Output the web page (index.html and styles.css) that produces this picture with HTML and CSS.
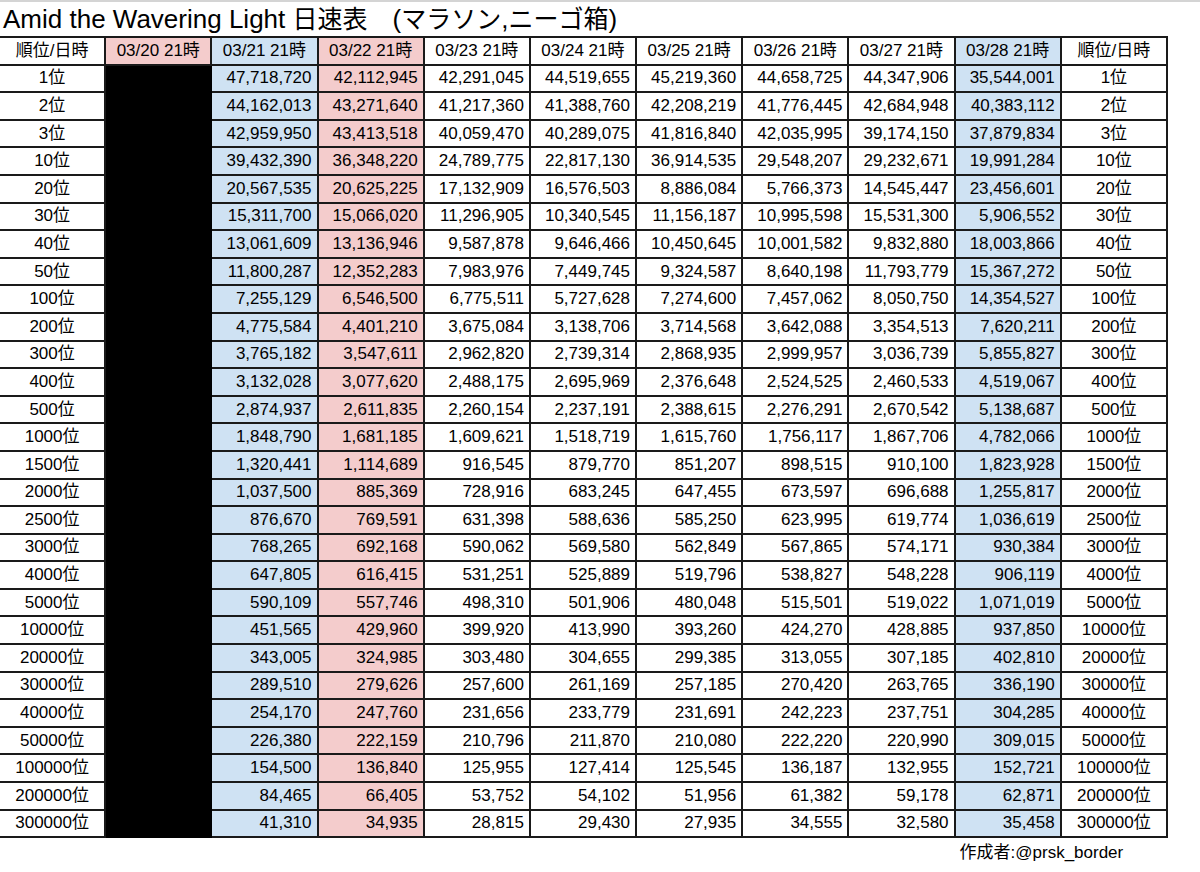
FILE: index.html
```html
<!DOCTYPE html>
<html lang="ja">
<head>
<meta charset="utf-8">
<title>Amid the Wavering Light 日速表</title>
<link rel="stylesheet" href="styles.css">
</head>
<body>
<div class="sheet">
  <div class="title">Amid the Wavering Light <span class="jp">日速表　</span>(<span class="jp">マラソン</span>,<span class="jp">ニーゴ箱</span>)</div>
  <table class="grid">
    <thead>
      <tr>
        <th>順位/日時</th>
        <th class="pink">03/20 21時</th>
        <th class="blue">03/21 21時</th>
        <th class="pink">03/22 21時</th>
        <th>03/23 21時</th>
        <th>03/24 21時</th>
        <th>03/25 21時</th>
        <th>03/26 21時</th>
        <th>03/27 21時</th>
        <th class="blue">03/28 21時</th>
        <th>順位/日時</th>
      </tr>
    </thead>
    <tbody>
      <tr><td class="rank">1位</td><td class="black"></td><td class="num blue">47,718,720</td><td class="num pink">42,112,945</td><td class="num">42,291,045</td><td class="num">44,519,655</td><td class="num">45,219,360</td><td class="num">44,658,725</td><td class="num">44,347,906</td><td class="num blue">35,544,001</td><td class="rank">1位</td></tr>
      <tr><td class="rank">2位</td><td class="black"></td><td class="num blue">44,162,013</td><td class="num pink">43,271,640</td><td class="num">41,217,360</td><td class="num">41,388,760</td><td class="num">42,208,219</td><td class="num">41,776,445</td><td class="num">42,684,948</td><td class="num blue">40,383,112</td><td class="rank">2位</td></tr>
      <tr><td class="rank">3位</td><td class="black"></td><td class="num blue">42,959,950</td><td class="num pink">43,413,518</td><td class="num">40,059,470</td><td class="num">40,289,075</td><td class="num">41,816,840</td><td class="num">42,035,995</td><td class="num">39,174,150</td><td class="num blue">37,879,834</td><td class="rank">3位</td></tr>
      <tr><td class="rank">10位</td><td class="black"></td><td class="num blue">39,432,390</td><td class="num pink">36,348,220</td><td class="num">24,789,775</td><td class="num">22,817,130</td><td class="num">36,914,535</td><td class="num">29,548,207</td><td class="num">29,232,671</td><td class="num blue">19,991,284</td><td class="rank">10位</td></tr>
      <tr><td class="rank">20位</td><td class="black"></td><td class="num blue">20,567,535</td><td class="num pink">20,625,225</td><td class="num">17,132,909</td><td class="num">16,576,503</td><td class="num">8,886,084</td><td class="num">5,766,373</td><td class="num">14,545,447</td><td class="num blue">23,456,601</td><td class="rank">20位</td></tr>
      <tr><td class="rank">30位</td><td class="black"></td><td class="num blue">15,311,700</td><td class="num pink">15,066,020</td><td class="num">11,296,905</td><td class="num">10,340,545</td><td class="num">11,156,187</td><td class="num">10,995,598</td><td class="num">15,531,300</td><td class="num blue">5,906,552</td><td class="rank">30位</td></tr>
      <tr><td class="rank">40位</td><td class="black"></td><td class="num blue">13,061,609</td><td class="num pink">13,136,946</td><td class="num">9,587,878</td><td class="num">9,646,466</td><td class="num">10,450,645</td><td class="num">10,001,582</td><td class="num">9,832,880</td><td class="num blue">18,003,866</td><td class="rank">40位</td></tr>
      <tr><td class="rank">50位</td><td class="black"></td><td class="num blue">11,800,287</td><td class="num pink">12,352,283</td><td class="num">7,983,976</td><td class="num">7,449,745</td><td class="num">9,324,587</td><td class="num">8,640,198</td><td class="num">11,793,779</td><td class="num blue">15,367,272</td><td class="rank">50位</td></tr>
      <tr><td class="rank">100位</td><td class="black"></td><td class="num blue">7,255,129</td><td class="num pink">6,546,500</td><td class="num">6,775,511</td><td class="num">5,727,628</td><td class="num">7,274,600</td><td class="num">7,457,062</td><td class="num">8,050,750</td><td class="num blue">14,354,527</td><td class="rank">100位</td></tr>
      <tr><td class="rank">200位</td><td class="black"></td><td class="num blue">4,775,584</td><td class="num pink">4,401,210</td><td class="num">3,675,084</td><td class="num">3,138,706</td><td class="num">3,714,568</td><td class="num">3,642,088</td><td class="num">3,354,513</td><td class="num blue">7,620,211</td><td class="rank">200位</td></tr>
      <tr><td class="rank">300位</td><td class="black"></td><td class="num blue">3,765,182</td><td class="num pink">3,547,611</td><td class="num">2,962,820</td><td class="num">2,739,314</td><td class="num">2,868,935</td><td class="num">2,999,957</td><td class="num">3,036,739</td><td class="num blue">5,855,827</td><td class="rank">300位</td></tr>
      <tr><td class="rank">400位</td><td class="black"></td><td class="num blue">3,132,028</td><td class="num pink">3,077,620</td><td class="num">2,488,175</td><td class="num">2,695,969</td><td class="num">2,376,648</td><td class="num">2,524,525</td><td class="num">2,460,533</td><td class="num blue">4,519,067</td><td class="rank">400位</td></tr>
      <tr><td class="rank">500位</td><td class="black"></td><td class="num blue">2,874,937</td><td class="num pink">2,611,835</td><td class="num">2,260,154</td><td class="num">2,237,191</td><td class="num">2,388,615</td><td class="num">2,276,291</td><td class="num">2,670,542</td><td class="num blue">5,138,687</td><td class="rank">500位</td></tr>
      <tr><td class="rank">1000位</td><td class="black"></td><td class="num blue">1,848,790</td><td class="num pink">1,681,185</td><td class="num">1,609,621</td><td class="num">1,518,719</td><td class="num">1,615,760</td><td class="num">1,756,117</td><td class="num">1,867,706</td><td class="num blue">4,782,066</td><td class="rank">1000位</td></tr>
      <tr><td class="rank">1500位</td><td class="black"></td><td class="num blue">1,320,441</td><td class="num pink">1,114,689</td><td class="num">916,545</td><td class="num">879,770</td><td class="num">851,207</td><td class="num">898,515</td><td class="num">910,100</td><td class="num blue">1,823,928</td><td class="rank">1500位</td></tr>
      <tr><td class="rank">2000位</td><td class="black"></td><td class="num blue">1,037,500</td><td class="num pink">885,369</td><td class="num">728,916</td><td class="num">683,245</td><td class="num">647,455</td><td class="num">673,597</td><td class="num">696,688</td><td class="num blue">1,255,817</td><td class="rank">2000位</td></tr>
      <tr><td class="rank">2500位</td><td class="black"></td><td class="num blue">876,670</td><td class="num pink">769,591</td><td class="num">631,398</td><td class="num">588,636</td><td class="num">585,250</td><td class="num">623,995</td><td class="num">619,774</td><td class="num blue">1,036,619</td><td class="rank">2500位</td></tr>
      <tr><td class="rank">3000位</td><td class="black"></td><td class="num blue">768,265</td><td class="num pink">692,168</td><td class="num">590,062</td><td class="num">569,580</td><td class="num">562,849</td><td class="num">567,865</td><td class="num">574,171</td><td class="num blue">930,384</td><td class="rank">3000位</td></tr>
      <tr><td class="rank">4000位</td><td class="black"></td><td class="num blue">647,805</td><td class="num pink">616,415</td><td class="num">531,251</td><td class="num">525,889</td><td class="num">519,796</td><td class="num">538,827</td><td class="num">548,228</td><td class="num blue">906,119</td><td class="rank">4000位</td></tr>
      <tr><td class="rank">5000位</td><td class="black"></td><td class="num blue">590,109</td><td class="num pink">557,746</td><td class="num">498,310</td><td class="num">501,906</td><td class="num">480,048</td><td class="num">515,501</td><td class="num">519,022</td><td class="num blue">1,071,019</td><td class="rank">5000位</td></tr>
      <tr><td class="rank">10000位</td><td class="black"></td><td class="num blue">451,565</td><td class="num pink">429,960</td><td class="num">399,920</td><td class="num">413,990</td><td class="num">393,260</td><td class="num">424,270</td><td class="num">428,885</td><td class="num blue">937,850</td><td class="rank">10000位</td></tr>
      <tr><td class="rank">20000位</td><td class="black"></td><td class="num blue">343,005</td><td class="num pink">324,985</td><td class="num">303,480</td><td class="num">304,655</td><td class="num">299,385</td><td class="num">313,055</td><td class="num">307,185</td><td class="num blue">402,810</td><td class="rank">20000位</td></tr>
      <tr><td class="rank">30000位</td><td class="black"></td><td class="num blue">289,510</td><td class="num pink">279,626</td><td class="num">257,600</td><td class="num">261,169</td><td class="num">257,185</td><td class="num">270,420</td><td class="num">263,765</td><td class="num blue">336,190</td><td class="rank">30000位</td></tr>
      <tr><td class="rank">40000位</td><td class="black"></td><td class="num blue">254,170</td><td class="num pink">247,760</td><td class="num">231,656</td><td class="num">233,779</td><td class="num">231,691</td><td class="num">242,223</td><td class="num">237,751</td><td class="num blue">304,285</td><td class="rank">40000位</td></tr>
      <tr><td class="rank">50000位</td><td class="black"></td><td class="num blue">226,380</td><td class="num pink">222,159</td><td class="num">210,796</td><td class="num">211,870</td><td class="num">210,080</td><td class="num">222,220</td><td class="num">220,990</td><td class="num blue">309,015</td><td class="rank">50000位</td></tr>
      <tr><td class="rank">100000位</td><td class="black"></td><td class="num blue">154,500</td><td class="num pink">136,840</td><td class="num">125,955</td><td class="num">127,414</td><td class="num">125,545</td><td class="num">136,187</td><td class="num">132,955</td><td class="num blue">152,721</td><td class="rank">100000位</td></tr>
      <tr><td class="rank">200000位</td><td class="black"></td><td class="num blue">84,465</td><td class="num pink">66,405</td><td class="num">53,752</td><td class="num">54,102</td><td class="num">51,956</td><td class="num">61,382</td><td class="num">59,178</td><td class="num blue">62,871</td><td class="rank">200000位</td></tr>
      <tr><td class="rank">300000位</td><td class="black"></td><td class="num blue">41,310</td><td class="num pink">34,935</td><td class="num">28,815</td><td class="num">29,430</td><td class="num">27,935</td><td class="num">34,555</td><td class="num">32,580</td><td class="num blue">35,458</td><td class="rank">300000位</td></tr>
    </tbody>
    <tfoot>
      <tr class="credit-row">
        <td colspan="9"></td>
        <td colspan="2" class="credit">作成者:@prsk_border</td>
      </tr>
    </tfoot>
  </table>
</div>
</body>
</html>
```

FILE: styles.css
```css
html, body {
  margin: 0;
  padding: 0;
  background: #ffffff;
}

body {
  font-family: "Liberation Sans", Arial, "Noto Sans CJK JP", sans-serif;
  color: #000;
  width: 1200px;
  height: 872px;
  overflow: hidden;
}

.sheet {
  border-top: 2px solid #d4d4d4;
  display: flex;
  flex-direction: column;
}

.title {
  font-size: 26px;
  line-height: 34px;
  height: 34px;
  padding-left: 3px;
  white-space: nowrap;
}

.title .jp {
  font-size: 25px;
}

.grid {
  margin-left: -2px;
  width: 1170px;
  table-layout: fixed;
  border-collapse: collapse;
  font-size: 17px;
}

.grid th,
.grid td {
  border: 2px solid #1a1a1a;
  height: 27.6px;
  padding: 0 5px;
  box-sizing: border-box;
  white-space: nowrap;
  font-weight: normal;
  line-height: 20px;
  vertical-align: middle;
}

.grid th {
  text-align: center;
}

.rank {
  text-align: center;
}

.num {
  text-align: right;
}

.pink {
  background: #f4cccc;
}

.blue {
  background: #cfe2f3;
}

.black {
  background: #000;
  border-color: #000 !important;
}

.credit-row td {
  border: none;
  height: 30px;
}

.credit {
  text-align: left;
  padding-left: 3px;
  overflow: visible;
}
```
